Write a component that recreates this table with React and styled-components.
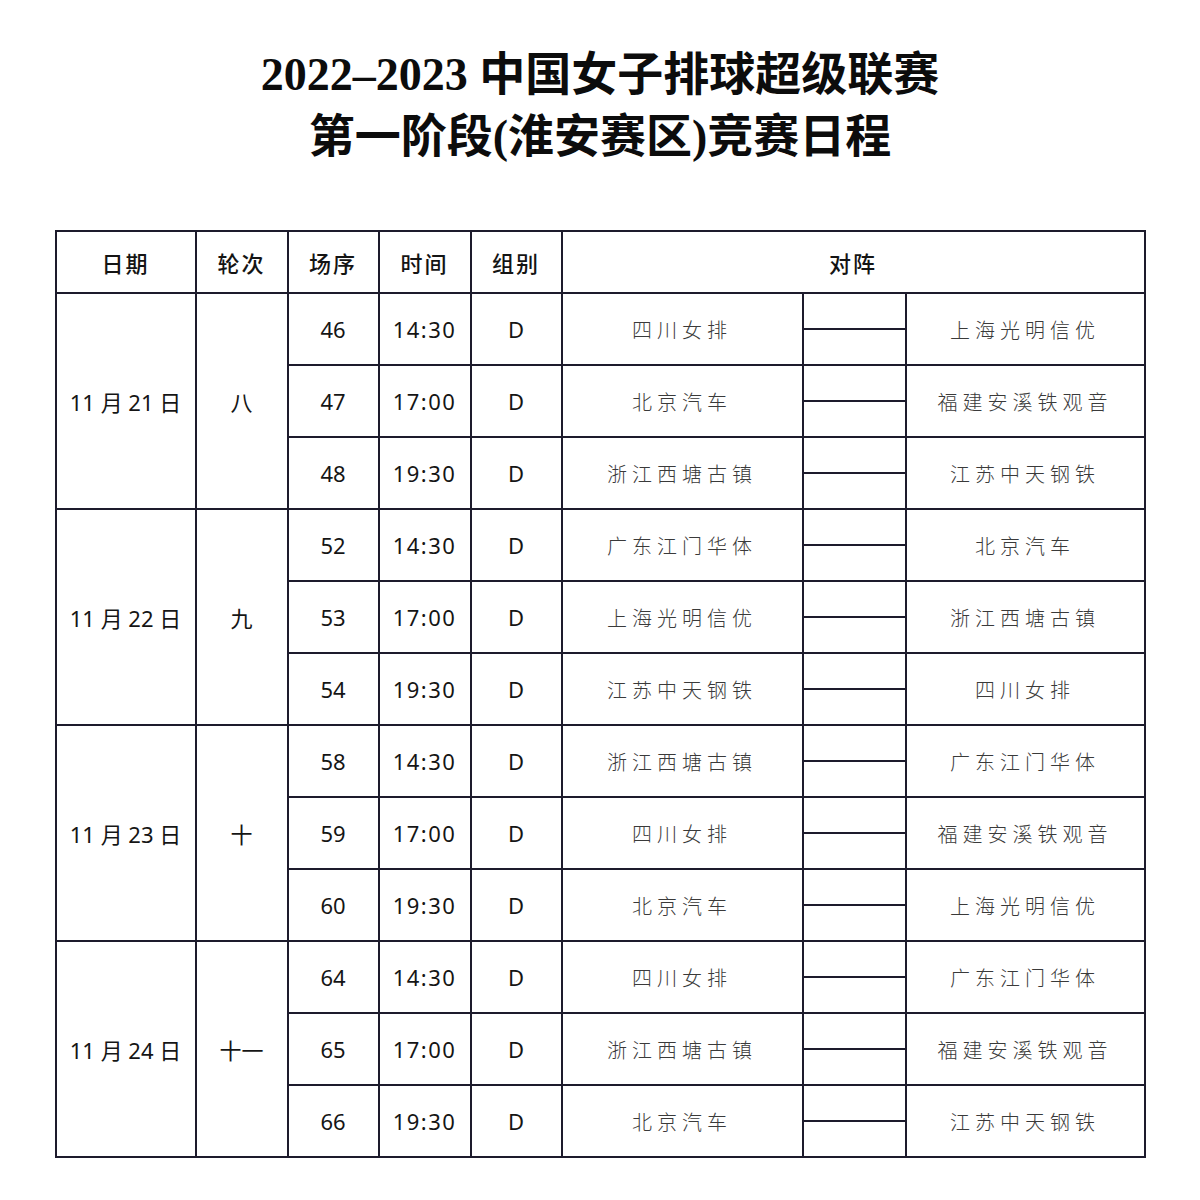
import React from 'react'
import styled, { createGlobalStyle } from 'styled-components'

const GlobalStyle = createGlobalStyle`
  html, body {
    margin: 0;
    padding: 0;
    background: #fff;
  }
  body {
    font-family: "Noto Sans", "Noto Sans CJK SC", sans-serif;
    color: #111;
  }
`

const Page = styled.div`
  width: 1200px;
  height: 1200px;
  display: flex;
  flex-direction: column;
  align-items: center;
  padding-top: 44px;
  box-sizing: border-box;
`

const Title = styled.h1`
  margin: 0;
  font-family: "Liberation Serif", "Noto Sans CJK SC", serif;
  font-weight: 700;
  font-size: 46px;
  line-height: 62px;
  text-align: center;
  color: #0c0c0c;
`

const Schedule = styled.table`
  margin-top: 62px;
  width: 1089px;
  border-collapse: collapse;
  table-layout: fixed;
  border: 2px solid #1d1b2c;
`

const Th = styled.th`
  height: 60px;
  border: 2px solid #1d1b2c;
  font-size: 22px;
  font-weight: 500;
  letter-spacing: 2px;
  color: #141414;
  padding: 0;
`

const Td = styled.td`
  height: 70px;
  border: 2px solid #1d1b2c;
  text-align: center;
  padding: 0;
  font-size: ${p => (p.$team ? '20px' : '22px')};
  font-weight: ${p => (p.$team ? 300 : 400)};
  letter-spacing: ${p => (p.$team ? '5px' : '0')};
  color: ${p => (p.$team ? '#3a3a3a' : '#151515')};
`

const Time = styled.span`
  letter-spacing: 1.5px;
`

const Dash = styled.div`
  height: 2px;
  background: #1d1b2c;
`

const days = [
  {
    date: '11月21日', round: '八',
    games: [
      ['46', '14:30', '四川女排', '上海光明信优'],
      ['47', '17:00', '北京汽车', '福建安溪铁观音'],
      ['48', '19:30', '浙江西塘古镇', '江苏中天钢铁'],
    ],
  },
  {
    date: '11月22日', round: '九',
    games: [
      ['52', '14:30', '广东江门华体', '北京汽车'],
      ['53', '17:00', '上海光明信优', '浙江西塘古镇'],
      ['54', '19:30', '江苏中天钢铁', '四川女排'],
    ],
  },
  {
    date: '11月23日', round: '十',
    games: [
      ['58', '14:30', '浙江西塘古镇', '广东江门华体'],
      ['59', '17:00', '四川女排', '福建安溪铁观音'],
      ['60', '19:30', '北京汽车', '上海光明信优'],
    ],
  },
  {
    date: '11月24日', round: '十一',
    games: [
      ['64', '14:30', '四川女排', '广东江门华体'],
      ['65', '17:00', '浙江西塘古镇', '福建安溪铁观音'],
      ['66', '19:30', '北京汽车', '江苏中天钢铁'],
    ],
  },
]

const widths = [140, 92, 91, 92, 91, 241, 103, 239]

const DateText = ({ text }) => {
  // "11月21日" -> digits spaced from the CJK
  const m = text.match(/(\d+)月(\d+)日/)
  return <span>{m[1]} 月 {m[2]} 日</span>
}

export default function App() {
  return (
    <>
      <GlobalStyle />
      <Page>
        <Title>
          2022–2023 中国女子排球超级联赛
          <br />
          第一阶段(淮安赛区)竞赛日程
        </Title>
        <Schedule>
          <colgroup>
            {widths.map((w, i) => <col key={i} style={{ width: w }} />)}
          </colgroup>
          <thead>
            <tr>
              <Th>日期</Th>
              <Th>轮次</Th>
              <Th>场序</Th>
              <Th>时间</Th>
              <Th>组别</Th>
              <Th colSpan={3}>对阵</Th>
            </tr>
          </thead>
          <tbody>
            {days.map(day =>
              day.games.map((g, i) => (
                <tr key={g[0]}>
                  {i === 0 && (
                    <>
                      <Td rowSpan={3}><DateText text={day.date} /></Td>
                      <Td rowSpan={3}>{day.round}</Td>
                    </>
                  )}
                  <Td>{g[0]}</Td>
                  <Td><Time>{g[1]}</Time></Td>
                  <Td>D</Td>
                  <Td $team>{g[2]}</Td>
                  <Td><Dash /></Td>
                  <Td $team>{g[3]}</Td>
                </tr>
              ))
            )}
          </tbody>
        </Schedule>
      </Page>
    </>
  )
}
